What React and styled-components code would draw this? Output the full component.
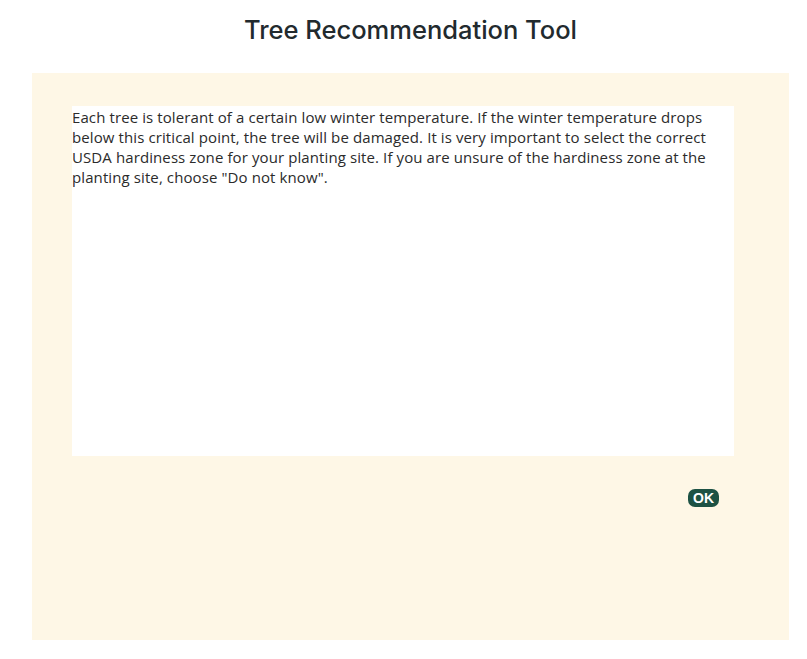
import styled, { createGlobalStyle } from 'styled-components';

const GlobalStyle = createGlobalStyle`
  body {
    margin: 0;
    background: #ffffff;
    font-family: "Open Sans", "Liberation Sans", sans-serif;
  }
`;

export default function App() {
  return (
    <Page>
      <GlobalStyle />
      <Titulo>Tree Recommendation Tool</Titulo>

      <Painel>
        <Caixa>
          <Texto>
            Each tree is tolerant of a certain low winter temperature. If the winter temperature drops
            below this critical point, the tree will be damaged. It is very important to select the correct
            USDA hardiness zone for your planting site. If you are unsure of the hardiness zone at the
            planting site, choose "Do not know".
          </Texto>
        </Caixa>

        <Rodape>
          <Botao>OK</Botao>
        </Rodape>
      </Painel>
    </Page>
  );
}

// Styled Components
const Page = styled.div`
  width: 807px;
  padding-bottom: 19px;
`;

const Titulo = styled.h1`
  margin: 0;
  height: 73px;
  padding: 13px 0 0 14px;
  box-sizing: border-box;
  text-align: center;
  font-family: Inter, "Open Sans", sans-serif;
  font-weight: 500;
  font-size: 25.5px;
  line-height: 34px;
  color: #222a2e;
`;

const Painel = styled.div`
  margin-left: 32px;
  width: 757px;
  height: 567px;
  box-sizing: border-box;
  background: #fef7e6;
  padding: 33px 55px 0 40px;
`;

const Caixa = styled.div`
  background: #ffffff;
  height: 350px;
  padding-top: 1px;
  box-sizing: border-box;
`;

const Texto = styled.p`
  margin: 0;
  width: 660px;
  font-size: 15px;
  letter-spacing: 0.1px;
  line-height: 20px;
  color: #2b2b2b;
`;

const Rodape = styled.div`
  display: flex;
  justify-content: flex-end;
  padding: 33px 15px 0 0;
`;

const Botao = styled.button`
  width: 31px;
  height: 18px;
  padding: 0;
  border: none;
  border-radius: 7px;
  background: #1d5244;
  color: #ffffff;
  font-family: "Liberation Sans", Arial, sans-serif;
  font-weight: bold;
  font-size: 14px;
  line-height: 18px;
  cursor: pointer;
`;
